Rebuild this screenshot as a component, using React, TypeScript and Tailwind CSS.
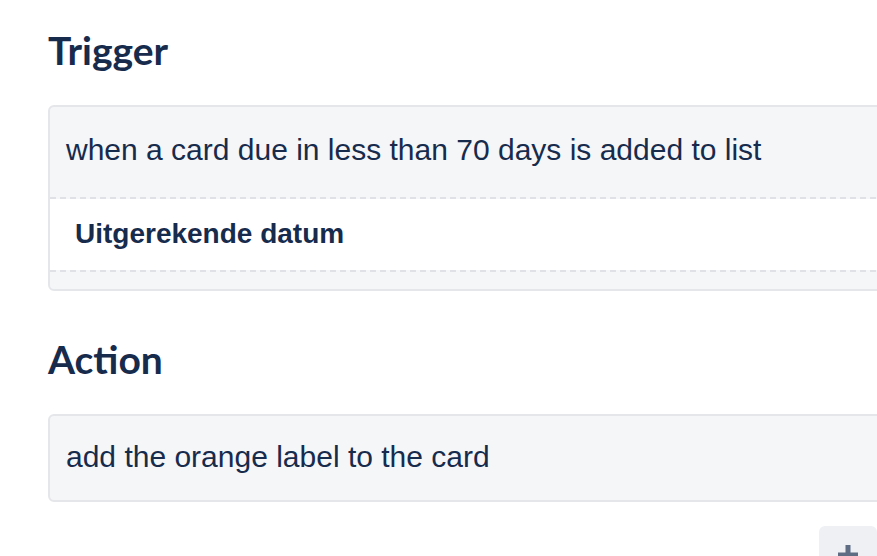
import React from "react";

const Dashed = () => (
  <div className="h-[2px] w-full bg-[repeating-linear-gradient(90deg,#dfe1e6_0_6px,transparent_6px_10px)]" />
);

const App = () => {
  return (
    <div className="h-screen w-screen overflow-hidden bg-white text-[#172b4d]">
      <div className="w-[980px] pl-12">
        <h2 className="mt-[27px] font-['Lato',sans-serif] text-[39px] font-bold leading-[47px]">Trigger</h2>

        <div className="mt-[31px] overflow-hidden rounded-md border-2 border-[#e4e6ea] bg-[#f5f6f8]">
          <div className="flex h-[90px] items-center px-4 pb-[6px] font-['Liberation_Sans',Arial,sans-serif] text-[30px]">
            when a card due in less than 70 days is added to list
          </div>
          <Dashed />
          <div className="flex h-[71px] items-center bg-white px-[25px] pb-[2px] font-['Liberation_Sans',Arial,sans-serif] text-[28px] font-bold">
            Uitgerekende datum
          </div>
          <Dashed />
          <div className="h-[17px]" />
        </div>

        <h2 className="mt-[45px] font-['Lato',sans-serif] text-[39px] font-bold leading-[47px]">Action</h2>

        <div className="mt-[31px] flex h-[88px] items-center rounded-md border-2 border-[#e4e6ea] bg-[#f5f6f8] px-4 pb-[4px] font-['Liberation_Sans',Arial,sans-serif] text-[30px]">
          add the orange label to the card
        </div>

        <div className="mt-[24px] flex justify-end pr-[103px]">
          <button className="flex h-[48px] w-[58px] items-start justify-center rounded-md bg-[#eef0f3] pt-[17px]">
            <svg width="24" height="24" viewBox="0 0 24 24">
              <path d="M12 2v20M2 12h20" stroke="#5e6c84" strokeWidth="5" />
            </svg>
          </button>
        </div>
      </div>
    </div>
  );
};

export default App;
